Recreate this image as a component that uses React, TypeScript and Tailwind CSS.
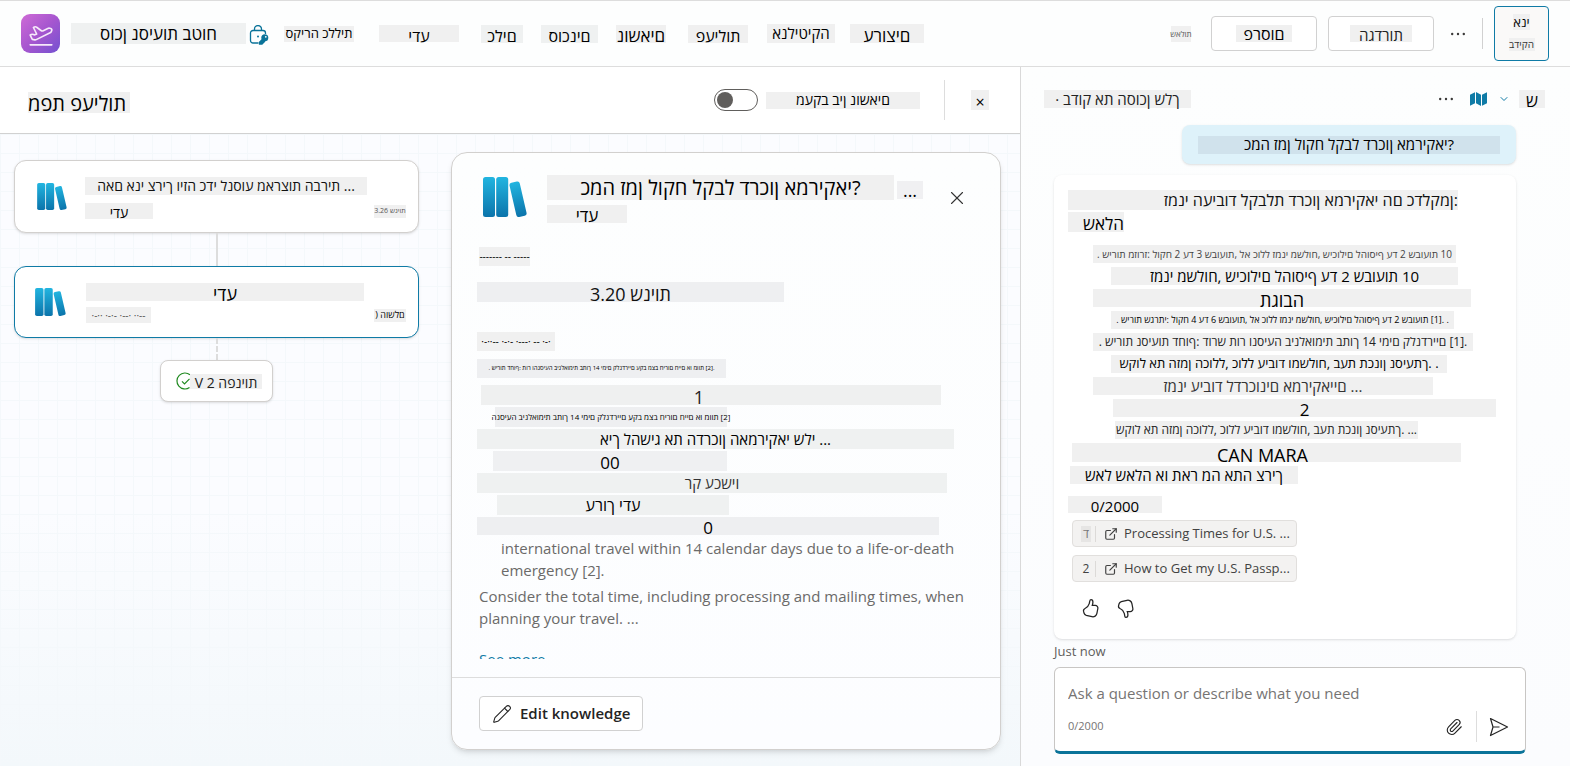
import type { ReactNode } from 'react';
import { ChevronDown, ExternalLink, Paperclip, Pencil, PlaneTakeoff, X } from 'lucide-react';

/* Hebrew strings are laid out left to right, letter by letter, on a grey plate. */
function Plate({ c, children }: { c: string; children: ReactNode }) {
  return (
    <span
      dir="ltr"
      className={`flex shrink-0 items-center whitespace-nowrap [unicode-bidi:bidi-override] ${c}`}
    >
      {children}
    </span>
  );
}

function Books({ c }: { c: string }) {
  return (
    <svg viewBox="0 0 44 40" className={c} aria-hidden="true">
      <defs>
        <linearGradient id="book" x1="0" y1="0" x2="0" y2="1">
          <stop offset="0" stopColor="#22b5e0" />
          <stop offset="1" stopColor="#0b74ab" />
        </linearGradient>
      </defs>
      <rect x="0" y="0" width="12" height="40" rx="2.5" fill="url(#book)" />
      <rect x="13.2" y="0" width="12" height="40" rx="2.5" fill="url(#book)" />
      <rect x="29.8" y="4.8" width="10.5" height="35" rx="2.5" fill="url(#book)" transform="rotate(-13 35 22.3)" />
    </svg>
  );
}

function Dots() {
  return (
    <svg viewBox="0 0 16 4" className="h-1 w-4" aria-hidden="true" fill="#3b3a39">
      <circle cx="2.2" cy="2" r="1.2" />
      <circle cx="8" cy="2" r="1.2" />
      <circle cx="13.8" cy="2" r="1.2" />
    </svg>
  );
}

const thumb =
  'M10.5 1.5c.9 0 1.8.8 1.8 2.3 0 1.2-.3 2.4-.6 3.2h2.8c1.6 0 2.8 1.4 2.5 3l-.9 4.7c-.4 2.2-2.5 3.6-4.7 3.1l-5.4-1.3c-1-.3-1.8-1-2.1-2l-.5-1.7c-.3-1.2.3-2.3 1.4-2.8 2.2-.9 3.4-2.6 4-4.6.3-.9.4-2 .6-2.9.1-.6.5-1 1.1-1z';

function Chip({ n, label, c }: { n: string; label: string; c: string }) {
  return (
    <a href="#source" className="flex h-[27px] w-[225px] items-center rounded border border-[#e1dfdd] bg-[#f3f2f1] text-[13px] text-[#424242]">
      <span className={`ml-2 flex h-4 w-[10px] shrink-0 items-center justify-center text-xs ${c}`}>{n}</span>
      <span className="ml-1 h-4 w-px shrink-0 bg-[#dcdad8]" />
      <ExternalLink className="ml-2 size-[14px] shrink-0" strokeWidth={2} />
      <span className="ml-[6px] whitespace-nowrap">{label}</span>
    </a>
  );
}

export default function App() {
  return (
    <div className="flex min-h-screen flex-col bg-white font-['Open_Sans','Noto_Sans',sans-serif] text-black">
      <header className="flex h-[67px] items-center border-y border-[#dddddd] bg-[#fdfefe] pl-[21px] pr-[21px]">
        <span className="flex size-[39px] items-center justify-center rounded-[9px] bg-linear-to-br from-[#cf6bd6] via-[#a656cf] to-[#7350d0]">
          <PlaneTakeoff className="size-[26px] text-[#f6e9fa]" strokeWidth={1.5} />
        </span>
        <Plate c="ml-[11px] h-[21px] w-[175px] justify-center bg-[#eff1f1] pt-px text-[17px]">סוכן נסיעות בטוח</Plate>
        <svg viewBox="0 0 20 20" className="ml-[3px] mt-[2px] size-5" fill="none" stroke="#0a7399" strokeWidth="1.3" aria-hidden="true">
          <path d="M9.500 18H4a2.500 2.500 0 0 1-2.500-2.500V8A2.500 2.500 0 0 1 4 5.500h10A2.500 2.500 0 0 1 16.500 8v1" />
          <path d="M5.500 5.500V4a3.500 3.500 0 0 1 7 0v1.500" />
          <circle cx="9" cy="11.500" r="1" fill="#0a7399" stroke="none" />
          <circle cx="15.800" cy="12.800" r="3.500" fill="#0a7399" stroke="none" />
          <path d="M13.500 14.200L10.500 17.200v1.800h2.500l3-3" fill="#0a7399" />
          <circle cx="16.800" cy="11.800" r=".9" fill="#fff" stroke="none" />
        </svg>
        <nav className="flex items-center text-base">
          <Plate c="ml-[15px] h-4 w-[70px] justify-center bg-[#f0f0f0] text-[13px]">סקירה כללית</Plate>
          <Plate c="ml-[25px] h-[17px] w-20 justify-center bg-[#f0f0f0] pt-1">ידע</Plate>
          <Plate c="ml-[22px] h-[18px] w-[42px] justify-center bg-[#eff1f1] pt-1">כלים</Plate>
          <Plate c="ml-[18px] h-[18px] w-[57px] justify-center bg-[#eff1f1] pt-1">סוכנים</Plate>
          <Plate c="ml-[18px] h-[18px] w-[50px] justify-center bg-[#f0f0f0] pt-1 text-[17px]">נושאים</Plate>
          <Plate c="ml-[22px] h-[18px] w-[60px] justify-center bg-[#f0f0f0] pt-1">פעילות</Plate>
          <Plate c="ml-[19px] h-[19px] w-[68px] justify-center bg-[#f0f0f0] text-[15px]">אנליטיקה</Plate>
          <Plate c="ml-[15px] h-[19px] w-[74px] justify-center bg-[#f0f0f0] pt-1 text-[17px]">ערוצים</Plate>
        </nav>
        <div className="ml-auto flex items-center">
          <Plate c="h-4 w-5 justify-center bg-[#f0f0f0] text-[8px] text-[#555]">שאלות</Plate>
          <button className="ml-5 flex h-[35px] w-[106px] items-center justify-center rounded border border-[#d1d1d1] bg-white">
            <Plate c="h-[17px] w-14 justify-center bg-[#f0f0f0] text-base">פרסום</Plate>
          </button>
          <button className="ml-[11px] flex h-[35px] w-[106px] items-center justify-center rounded border border-[#d1d1d1] bg-white">
            <Plate c="h-[17px] w-[62px] justify-center bg-[#f0f0f0] pt-1 text-[15px] text-[#222]">הגדרות</Plate>
          </button>
          <button aria-label="More" className="ml-4"><Dots /></button>
          <span className="ml-4 h-[31px] w-px bg-[#d1d1d1]" />
          <button className="ml-[11px] flex h-[55px] w-[55px] flex-col items-center gap-2 rounded border border-[#0f7ba6] bg-[#faf9f8] pt-[7px]">
            <Plate c="h-4 w-[17px] justify-center bg-[#f0f0f0] pt-[2px] text-[13px]">אני</Plate>
            <Plate c="h-[13px] w-[26px] justify-center bg-[#f0f0f0] text-[10px] text-[#333]">בדיקה</Plate>
          </button>
        </div>
      </header>

      <div className="flex flex-1">
        <main className="flex min-w-0 flex-1 flex-col">
          <div className="flex h-[67px] items-center border-b border-[#d1d1d1] bg-white pl-7 pr-[31px]">
            <h1>
              <Plate c="mt-1 h-[21px] w-[102px] bg-[#f0f0f0] pt-1 text-xl">מפת פעילות</Plate>
            </h1>
            <label className="ml-auto flex items-center gap-2">
              <input type="checkbox" role="switch" className="peer sr-only" />
              <span className="flex h-[22px] w-11 items-center rounded-full border border-[#605e5c] bg-white pl-[2px] peer-checked:justify-end">
                <span className="size-4 rounded-full bg-[#605e5c]" />
              </span>
              <Plate c="h-[17px] w-[154px] justify-center bg-[#f0f0f0] text-sm">מעקב בין נושאים</Plate>
            </label>
            <span className="ml-6 h-10 w-px bg-[#dddddd]" />
            <button aria-label="Close map" className="ml-[26px] flex h-5 w-[18px] items-center justify-center bg-[#f0f0f0] pt-1 text-base">×</button>
          </div>

          <div className="flex flex-1 items-start gap-8 bg-[#fbfcfe] bg-[linear-gradient(to_right,#f4f8fb_1px,transparent_1px),linear-gradient(to_bottom,#f4f8fb_1px,transparent_1px),linear-gradient(to_bottom,#fbfcff_60%,#f3f8fb)] bg-[size:19px_19px,19px_19px,100%_100%] pb-4 pl-[14px] pr-[19px] pt-[18px]">
            <section className="flex w-[405px] flex-col items-center pt-2">
              <article className="flex h-[73px] w-full items-start rounded-xl border border-[#d2d0ce] bg-white pl-[22px] pr-3 shadow">
                <Books c="mt-[22px] h-[27px] w-[30px]" />
                <div className="ml-[18px] mt-4 flex flex-1 flex-col gap-2">
                  <Plate c="h-[18px] w-[282px] justify-center bg-[#f0f0f0] text-sm text-[#111]">האם אני צריך ויזה כדי לנסוע מארצות הברית ...</Plate>
                  <div className="flex items-center justify-between">
                    <Plate c="h-4 w-[68px] justify-center bg-[#f0f0f0] pt-1 text-sm">ידע</Plate>
                    <Plate c="h-[13px] w-8 justify-center bg-[#f0f0f0] text-[7px] text-[#555]">3.26 שניות</Plate>
                  </div>
                </div>
              </article>
              <span className="h-[33px] w-[2px] bg-[#dddddd]" />
              <article className="flex h-[72px] w-full items-start rounded-xl border border-[#0f7ba6] bg-white pl-5 pr-3 shadow">
                <Books c="mt-[21px] h-[28px] w-[31px]" />
                <div className="ml-5 mt-4 flex flex-1 flex-col gap-[6px]">
                  <Plate c="h-[18px] w-[278px] justify-center bg-[#f0f0f0] pt-1 text-lg">ידע</Plate>
                  <div className="flex items-center justify-between">
                    <Plate c="h-4 w-[65px] justify-center bg-[#f0f0f0] text-[10px] text-[#555]">·-·· ·-·- ·--· ··--</Plate>
                    <Plate c="h-[13px] w-8 justify-center bg-[#f0f0f0] text-[9px]">) הושלם</Plate>
                  </div>
                </div>
              </article>
              <span className="h-[22px] border-l-2 border-dashed border-[#dddddd]" />
              <div className="flex h-[42px] w-[113px] items-center rounded-lg border border-[#d2d0ce] bg-white pl-[15px] shadow-sm">
                <svg viewBox="0 0 18 18" className="size-[18px]" fill="none" stroke="#218a21" strokeWidth="1.2" aria-hidden="true">
                  <path d="M14 2.800A8 8 0 1 0 13.500 15.600" />
                  <path d="M6 9.300l2.500 2.500 5-5" />
                </svg>
                <Plate c="-ml-1 h-[15px] w-[72px] justify-center bg-[#f0f0f0] pt-1 text-sm text-[#222]">V 2 הפניות</Plate>
              </div>
            </section>

            <section className="flex min-w-0 flex-1 flex-col rounded-2xl border border-[#d2d0ce] bg-linear-to-b from-[#fdfefe] to-[#fcfdff] shadow-md">
              <div className="flex items-start pl-[31px] pr-8 pt-[22px]">
                <Books c="mt-[2px] h-10 w-11" />
                <div className="ml-5 flex flex-col gap-[5px]">
                  <h2>
                    <Plate c="h-[25px] w-[347px] justify-center bg-[#f0f0f0] text-xl">כמה זמן לוקח לקבל דרכון אמריקאי?</Plate>
                  </h2>
                  <Plate c="h-[18px] w-20 justify-center bg-[#f0f0f0] pt-1 text-[17px]">ידע</Plate>
                </div>
                <button aria-label="More options" className="ml-[3px] mt-[6px] flex h-[18px] w-[26px] items-center justify-center bg-[#f0f0f2] text-lg">...</button>
                <button aria-label="Close" className="ml-auto mt-3"><X className="size-[22px] text-[#333]" strokeWidth={1.2} /></button>
              </div>

              <div className="flex h-[436px] flex-col items-start overflow-hidden pl-[25px] pr-7 pt-6">
                <Plate c="ml-[2px] h-[19px] w-[51px] justify-center bg-[#f0f0f0] text-[10px]">------- -- -----</Plate>
                <Plate c="mt-4 h-5 w-[307px] justify-center bg-[#eeeff1] pt-1 text-lg text-[#111]">3.20 שניות</Plate>
                <Plate c="mt-[30px] h-[19px] w-[78px] justify-center bg-[#f0f0f0] text-[10px]">·-··-- ·-·- ·---· -- ·-·</Plate>
                <Plate c="mt-2 h-[19px] w-[249px] justify-center bg-[#eeeff1] text-[6px]">. שירות דחוף: תור והנסיעה בינלאומית בתוך 14 ימים קלנדריים עקב מצב חירום חיים או מוות [2].</Plate>
                <div className="mt-[7px] flex flex-col items-start gap-[2px]">
                  <Plate c="ml-1 h-5 w-[460px] justify-center bg-[#eff0f0] pr-6 pt-1 text-lg text-[#222]">1</Plate>
                  <Plate c="ml-[18px] h-5 w-[232px] justify-center bg-[#eeeff1] text-[8px]">הנסיעה בינלאומית בתוך 14 ימים קלנדריים עקב מצב חירום חיים או מוות [2]</Plate>
                  <Plate c="h-5 w-[477px] justify-center bg-[#eff1f1] text-[15px]">איך להשיג את הדרכון האמריקאי שלי ...</Plate>
                  <Plate c="ml-4 h-5 w-[234px] justify-center bg-[#eff0f2] pt-1 text-[17px]">00</Plate>
                  <Plate c="h-5 w-[470px] justify-center bg-[#eff1f1] text-[15px] text-[#333]">רק עכשיו</Plate>
                  <Plate c="ml-5 h-5 w-[232px] justify-center bg-[#eff1f1] text-base">ערוך ידע</Plate>
                  <Plate c="h-[18px] w-[462px] justify-center bg-[#eeeff1] pt-1 text-[17px]">0</Plate>
                </div>
                <div className="ml-[2px] mt-[2px] text-[15px] leading-[22px] text-[#6b6a69]">
                  <p className="pl-[22px]">international travel within 14 calendar days due to a life-or-death emergency [2].</p>
                  <p className="mt-1">Consider the total time, including processing and mailing times, when planning your travel. ...</p>
                  <a href="#more" className="mt-[19px] block text-[#0f7ba6]">See more</a>
                </div>
              </div>

              <footer className="mt-[18px] border-t border-[#dddddd] py-[18px] pl-[27px]">
                <button className="flex h-[35px] items-center gap-2 rounded border border-[#d1d1d1] bg-white px-3 text-[15px] font-semibold text-[#242424]">
                  <Pencil className="size-5" strokeWidth={1.3} />
                  Edit knowledge
                </button>
              </footer>
            </section>
          </div>
        </main>

        <aside className="flex w-[550px] shrink-0 flex-col border-l border-[#d9d9d9] bg-linear-to-b from-[#fdfefe] to-[#fbfcfe] pb-3 pl-[33px] pr-11">
          <div className="-ml-[10px] -mr-[19px] flex h-[58px] items-center pt-[6px]">
            <Plate c="h-[18px] w-[147px] justify-center bg-[#f0f0f0] text-[15px] text-[#222]">· בדוק את הסוכן שלך</Plate>
            <button aria-label="Chat options" className="ml-auto"><Dots /></button>
            <svg viewBox="0 0 17 14" className="ml-4 h-[14px] w-[17px]" fill="#0f7ba6" aria-hidden="true">
              <path d="M0 2.800L5 .2v11L0 13.800z" />
              <path d="M6 0l5 2.800V14l-5-2.800z" />
              <path d="M12 2.800L17 .2v11l-5 2.600z" />
            </svg>
            <ChevronDown className="ml-[11px] size-3 text-[#0f7ba6]" strokeWidth={2} />
            <Plate c="ml-[9px] h-[18px] w-[26px] justify-center bg-[#f0f0f0] pt-1 text-[17px]">ש</Plate>
          </div>

          <div className="mr-[10px] flex h-[39px] items-center self-end rounded-lg bg-[#def2fa] px-4 shadow">
            <Plate c="h-[18px] w-[302px] justify-center bg-[#d0e2ec] text-[15px]">כמה זמן לוקח לקבל דרכון אמריקאי?</Plate>
          </div>

          <article className="mr-[10px] mt-[11px] flex h-[464px] flex-col items-start rounded-lg bg-white pl-[14px] pt-[15px] shadow">
            <Plate c="h-5 w-[390px] justify-end bg-[#f0f0f0] text-base text-[#111]">זמני העיבוד לקבלת דרכון אמריקאי הם כדלקמן:</Plate>
            <Plate c="mt-[2px] h-5 w-[56px] justify-end bg-[#f0f0f0] pt-1 text-[17px]">שאלה</Plate>
            <div className="mt-[13px] flex flex-col items-start gap-1 pl-[25px]">
              <Plate c="h-[18px] w-[363px] justify-center bg-[#f0f0f0] text-[10px] text-[#444]">. שירות מזורז: לוקח 2 עד 3 שבועות, לא כולל זמני משלוח, שיכולים להוסיף עד 2 שבועות 10</Plate>
              <Plate c="ml-[18px] h-[18px] w-[347px] justify-center bg-[#f0f0f0] text-[15px]">זמני משלוח, שיכולים להוסיף עד 2 שבועות 10</Plate>
              <Plate c="h-[18px] w-[378px] justify-center bg-[#f0f0f0] pt-1 text-lg">תגובה</Plate>
              <Plate c="ml-[18px] h-[18px] w-[343px] justify-center bg-[#f0f0f0] text-[9px]">. שירות שגרתי: לוקח 4 עד 6 שבועות, לא כולל זמני משלוח, שיכולים להוסיף עד 2 שבועות [1]. .</Plate>
              <Plate c="h-[18px] w-[380px] justify-center bg-[#f0f0f0] text-xs text-[#222]">. שירות נסיעות דחוף: דורש תור ונסיעה בינלאומית בתוך 14 ימים קלנדריים [1].</Plate>
              <Plate c="ml-[18px] h-[18px] w-[336px] justify-center bg-[#f0f0f0] text-[13px]">שקול את הזמן הכולל, כולל עיבוד ומשלוח, בעת תכנון נסיעתך. .</Plate>
              <Plate c="h-[18px] w-[340px] justify-center bg-[#f0f0f0] text-[15px] text-[#333]">זמני עיבוד לדרכונים אמריקאיים ...</Plate>
              <Plate c="ml-[20px] h-[18px] w-[383px] justify-center bg-[#f0f0f0] pt-1 text-[17px]">2</Plate>
              <Plate c="ml-[22px] h-[18px] w-[303px] justify-center bg-[#f0f0f0] text-xs text-[#222]">שקול את הזמן הכולל, כולל עיבוד ומשלוח, בעת תכנון נסיעתך. ...</Plate>
            </div>
            <Plate c="ml-[4px] mt-1 h-[19px] w-[389px] justify-center bg-[#f0f0f0] pr-2 pt-1 text-lg">CAN MARA</Plate>
            <Plate c="ml-[2px] mt-1 h-[18px] w-[228px] justify-center bg-[#f0f0f0] text-[15px]">שאל שאלה או תאר מה אתה צריך</Plate>
            <Plate c="mt-3 h-[17px] w-[94px] justify-center bg-[#f0f0f0] pt-1 text-[15px]">0/2000</Plate>
            <div className="ml-1 mt-[7px] flex flex-col gap-2">
              <Chip n="ד" label="Processing Times for U.S. ..." c="bg-[#e6e5e4] text-[#777]" />
              <Chip n="2" label="How to Get my U.S. Passp..." c="" />
            </div>
            <div className="ml-3 mt-4 flex gap-[14px] text-[#242424]">
              <button aria-label="Like">
                <svg viewBox="0 0 20 20" className="size-[21px]" fill="none" stroke="currentColor" strokeWidth="1.200"><path d={thumb} /></svg>
              </button>
              <button aria-label="Dislike">
                <svg viewBox="0 0 20 20" className="size-[21px] -scale-y-100" fill="none" stroke="currentColor" strokeWidth="1.200"><path d={thumb} /></svg>
              </button>
            </div>
          </article>

          <p className="mt-[3px] text-[13px] leading-[18px] text-[#605e5c]">Just now</p>

          <form className="mt-[7px] flex h-[87px] flex-col rounded-md border border-b-3 border-[#c8c6c4] border-b-[#0a7399] bg-white pl-[13px] pr-4 pt-[11px]">
            <input aria-label="Message" placeholder="Ask a question or describe what you need" className="h-7 w-full bg-transparent text-[15px] outline-none placeholder:text-[#767473]" />
            <div className="mt-1 flex items-center text-[#242424]">
              <span className="text-[11px] text-[#767473]">0/2000</span>
              <button type="button" aria-label="Attach" className="ml-auto"><Paperclip className="size-[18px]" strokeWidth={1.5} /></button>
              <span className="ml-[13px] h-[31px] w-px bg-[#dddddd]" />
              <button aria-label="Send" className="ml-3">
                <svg viewBox="0 0 20 20" className="size-5" fill="none" stroke="currentColor" strokeWidth="1.200" strokeLinejoin="round"><path d="M1.500 1.500L18.500 10 1.500 18.500 4 10zM4 10h6.500" /></svg>
              </button>
            </div>
          </form>
        </aside>
      </div>
    </div>
  );
}
